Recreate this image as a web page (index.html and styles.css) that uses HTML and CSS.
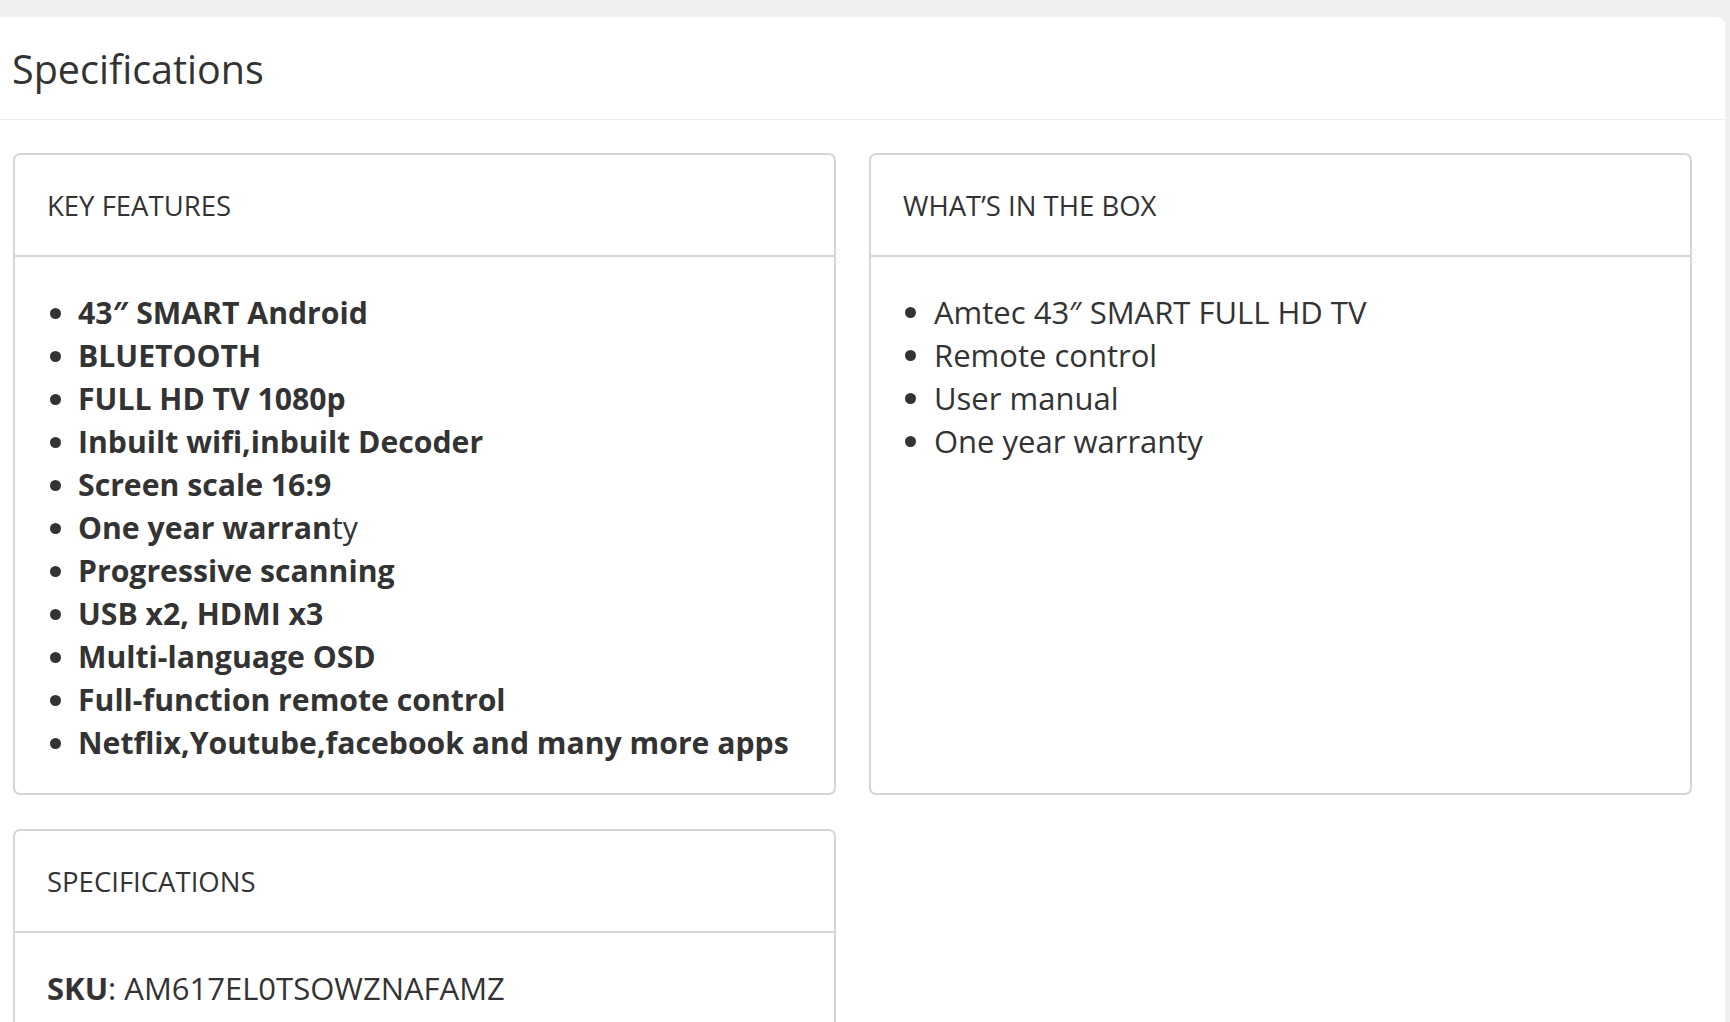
FILE: index.html
```html
<!DOCTYPE html>
<html lang="en">
<head>
<meta charset="utf-8">
<title>Specifications</title>
<link rel="stylesheet" href="styles.css">
</head>
<body>
<div class="page">
  <section class="panel">
    <header class="panel-head">
      <h2 class="panel-title">Specifications</h2>
    </header>
    <div class="panel-body">
      <div class="grid">
        <article class="card">
          <div class="card-head">KEY FEATURES</div>
          <div class="card-body">
            <ul class="list list-bold">
              <li>43″ SMART Android</li>
              <li>BLUETOOTH</li>
              <li>FULL HD TV 1080p</li>
              <li>Inbuilt wifi,inbuilt Decoder</li>
              <li>Screen scale 16:9</li>
              <li>One year warran<span class="normal">ty</span></li>
              <li>Progressive scanning</li>
              <li>USB x2, HDMI x3</li>
              <li>Multi-language OSD</li>
              <li>Full-function remote control</li>
              <li>Netflix,Youtube,facebook and many more apps</li>
            </ul>
          </div>
        </article>
        <article class="card">
          <div class="card-head">WHAT’S IN THE BOX</div>
          <div class="card-body">
            <ul class="list">
              <li>Amtec 43″ SMART FULL HD TV</li>
              <li>Remote control</li>
              <li>User manual</li>
              <li>One year warranty</li>
            </ul>
          </div>
        </article>
        <article class="card card-last">
          <div class="card-head">SPECIFICATIONS</div>
          <div class="card-body">
            <p class="spec-line"><b>SKU</b>: AM617EL0TSOWZNAFAMZ</p>
          </div>
        </article>
      </div>
    </div>
  </section>
</div>
</body>
</html>
```

FILE: styles.css
```css
html, body {
  margin: 0;
  padding: 0;
}
body {
  background: #f0f0f0;
  font-family: "Open Sans", "Noto Sans", sans-serif;
  color: #333333;
  overflow: hidden;
  height: 1022px;
}
.page {
  padding-top: 17px;
  padding-right: 5px;
}
.panel {
  background: #ffffff;
  border-top-right-radius: 8px;
  min-height: 1005px;
}
.panel-head {
  padding: 27px 13px 25px 12px;
  border-bottom: 1px solid #ececec;
}
.panel-title {
  margin: 0;
  font-size: 39.5px;
  line-height: 50px;
  font-weight: 400;
}
.panel-body {
  padding: 33px 33px 0 13px;
}
.grid {
  display: grid;
  grid-template-columns: 823px 823px;
  column-gap: 33px;
  row-gap: 34px;
}
.card {
  border: 2px solid #d6d6d6;
  border-radius: 7px;
  background: #ffffff;
}
.card-last {
  border-bottom: none;
  border-radius: 7px 7px 0 0;
}
.card-head {
  padding: 31px 32px 29px;
  font-size: 27.5px;
  line-height: 40px;
  border-bottom: 2px solid #d6d6d6;
}
.card-body {
  padding: 34px 32px 29px;
}
.list {
  margin: 0;
  padding-left: 31px;
  font-size: 31px;
  line-height: 43px;
}
.list-bold {
  font-size: 30.2px;
  font-weight: 700;
}
.list-bold .normal {
  font-weight: 400;
}
.spec-line {
  margin: 0;
  font-size: 31px;
  line-height: 43px;
}
.spec-line b {
  font-weight: 700;
}
```
